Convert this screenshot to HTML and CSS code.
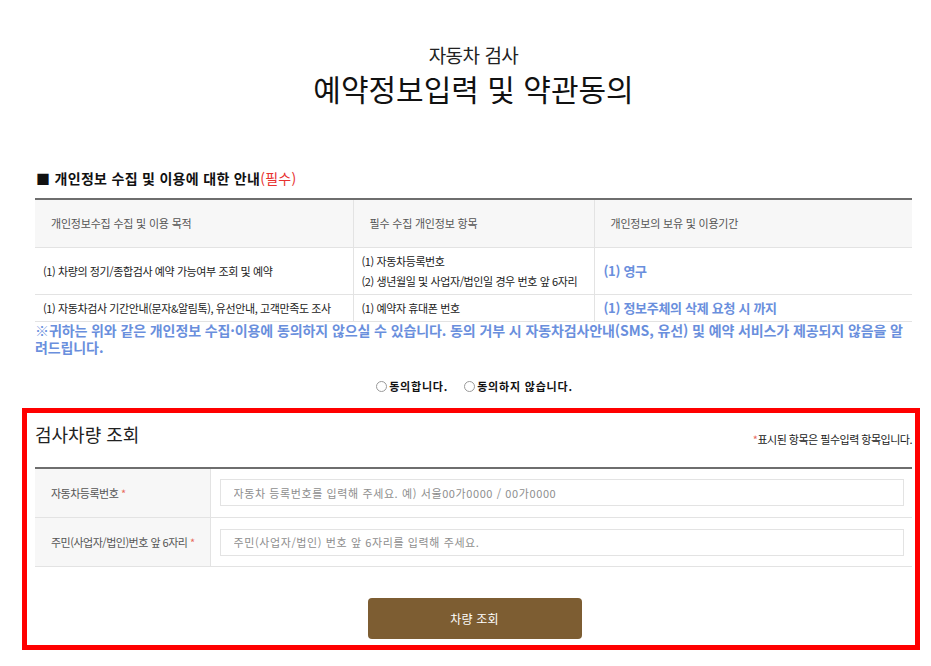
FILE: index.html
```html
<!DOCTYPE html>
<html lang="ko">
<head>
<meta charset="utf-8">
<title>예약정보입력 및 약관동의</title>
<link rel="stylesheet" href="styles.css">
</head>
<body>
<div class="wrap">
  <header class="page-head">
    <p class="sub-title">자동차 검사</p>
    <h1 class="main-title">예약정보입력 및 약관동의</h1>
  </header>

  <section class="privacy">
    <h2 class="sec-title">■ 개인정보 수집 및 이용에 대한 안내<span class="req">(필수)</span></h2>
    <table class="info-table">
      <colgroup><col class="c1"><col class="c2"><col class="c3"></colgroup>
      <thead>
        <tr>
          <th class="th1">개인정보수집 수집 및 이용 목적</th>
          <th>필수 수집 개인정보 항목</th>
          <th>개인정보의 보유 및 이용기간</th>
        </tr>
      </thead>
      <tbody>
        <tr class="r2">
          <td>(1) 차량의 정기/종합검사 예약 가능여부 조회 및 예약</td>
          <td><p class="l1">(1) 자동차등록번호</p><p class="l2">(2) 생년월일 및 사업자/법인일 경우 번호 앞 6자리</p></td>
          <td class="blue">(1) 영구</td>
        </tr>
        <tr class="r3">
          <td>(1) 자동차검사 기간안내(문자&amp;알림톡), 유선안내, 고객만족도 조사</td>
          <td>(1) 예약자 휴대폰 번호</td>
          <td class="blue">(1) 정보주체의 삭제 요청 시 까지</td>
        </tr>
      </tbody>
    </table>
    <p class="notice">※귀하는 위와 같은 개인정보 수집·이용에 동의하지 않으실 수 있습니다. 동의 거부 시 자동차검사안내(SMS, 유선) 및 예약 서비스가 제공되지 않음을 알려드립니다.</p>
    <div class="agree">
      <label class="radio"><input type="radio" name="agree"><span>동의합니다.</span></label>
      <label class="radio"><input type="radio" name="agree"><span>동의하지 않습니다.</span></label>
    </div>
  </section>

  <section class="lookup">
    <div class="lookup-head">
      <h2 class="lookup-title">검사차량 조회</h2>
      <p class="req-note"><span class="star">*</span>표시된 항목은 필수입력 항목입니다.</p>
    </div>
    <table class="form-table">
      <tr class="row1">
        <th>자동차등록번호 <span class="star">*</span></th>
        <td><input class="field" type="text" placeholder="자동차 등록번호를 입력해 주세요. 예) 서울00가0000 / 00가0000"></td>
      </tr>
      <tr>
        <th>주민(사업자/법인)번호 앞 6자리 <span class="star">*</span></th>
        <td><input class="field" type="text" placeholder="주민(사업자/법인) 번호 앞 6자리를 입력해 주세요."></td>
      </tr>
    </table>
    <div class="btn-row"><button class="btn" type="button">차량 조회</button></div>
  </section>
</div>
</body>
</html>
```

FILE: styles.css
```css
* { box-sizing: border-box; }
html, body { margin: 0; padding: 0; background: #fff; }
body {
  font-family: "Noto Sans CJK KR", "Noto Sans", "Liberation Sans", sans-serif;
  color: #222;
}
.wrap {
  width: 877px;
  margin-left: 35px;
}
p, h1, h2 { margin: 0; font-weight: normal; }

.page-head { text-align: center; padding-top: 42px; }
.sub-title { font-size: 19px; line-height: 26px; color: #222; letter-spacing: -0.5px; }
.main-title { font-size: 30px; line-height: 40px; margin-top: 0; color: #111; letter-spacing: 0; }

.privacy { margin-top: 61px; }
.sec-title {
  font-size: 14px; line-height: 18px; font-weight: bold; color: #111;
  padding-left: 1px; letter-spacing: 0.3px;
}
.sec-title .req { color: #e8312f; font-weight: normal; }

.info-table {
  margin-top: 11px;
  width: 877px;
  border-collapse: collapse;
  table-layout: fixed;
  border-top: 2px solid #6e6e6e;
}
.info-table .c1 { width: 318px; }
.info-table .c2 { width: 241px; }
.info-table .c3 { width: 318px; }
.info-table th, .info-table td {
  border: 1px solid #e3e3e3;
  font-size: 11px;
  letter-spacing: -0.4px;
  text-align: left;
  vertical-align: middle;
}
.info-table tr > :first-child { border-left: 0; }
.info-table tr > :last-child { border-right: 0; }
.info-table th {
  background: #f7f7f7;
  color: #555;
  font-weight: normal;
  height: 48px;
  padding: 0 0 0 16px;
  letter-spacing: -0.2px;
}
.info-table td { color: #222; padding: 0 0 0 8px; }
.info-table .r2 td { height: 47px; }
.info-table .r3 td { height: 27px; }
.info-table .l1, .info-table .l2 { line-height: 20px; }
.info-table td.blue {
  color: #6a8fdd; font-weight: bold; font-size: 13px; letter-spacing: -0.3px; padding-left: 9px;
}

.notice {
  margin-top: 0;
  font-size: 14px; line-height: 17px; font-weight: bold;
  color: #6a8fdd;
  word-break: break-all;
  letter-spacing: -0.1px;
}

.agree {
  display: flex; justify-content: center; gap: 16px;
  margin-top: 15px; height: 30px; align-items: center;
  padding-left: 2px;
}
.radio { display: flex; align-items: center; gap: 2px; font-size: 11px; font-weight: bold; color: #111; letter-spacing: 0.8px; }
.radio input {
  appearance: none; -webkit-appearance: none;
  width: 11px; height: 11px; margin: 1px 0 0 0;
  border: 1px solid #9a9a9a; border-radius: 50%; background: #fff;
}

.lookup {
  margin: 7px -8px 0 -13px;
  border: 5px solid #ff0000;
  padding: 9px 3px 6px 8px;
}
.lookup-head { display: flex; justify-content: space-between; align-items: flex-end; padding-bottom: 21px; }
.lookup-title { font-size: 18px; line-height: 24px; color: #222; letter-spacing: 0; }
.req-note { font-size: 11px; line-height: 14px; color: #222; letter-spacing: -0.5px; }
.star { color: #e86a5e; }

.form-table {
  width: 877px;
  border-collapse: collapse;
  border-top: 2px solid #6e6e6e;
}
.form-table th, .form-table td { border-bottom: 1px solid #e3e3e3; height: 49px; }
.form-table .row1 th, .form-table .row1 td { height: 50px; }
.form-table th {
  width: 175px; background: #f7f7f7; border-right: 1px solid #e3e3e3;
  text-align: left; font-weight: normal; font-size: 11px; color: #555;
  padding-left: 16px; letter-spacing: -0.5px;
}
.form-table td { padding: 0 8px 0 9px; }
.field {
  display: block; width: 100%; height: 27px;
  border: 1px solid #e3e3e3; padding: 0 13px;
  font-family: inherit; font-size: 11px; letter-spacing: 0.6px; color: #333;
  outline: none;
}
.field::placeholder { color: #8e8e8e; }

.btn-row { display: flex; justify-content: center; padding-top: 31px; padding-left: 2px; }
.btn {
  width: 214px; height: 41px;
  background: #7d5d32; color: #fff; border: 0; border-radius: 4px;
  font-family: inherit; font-size: 12px; letter-spacing: 0.2px;
}
```
